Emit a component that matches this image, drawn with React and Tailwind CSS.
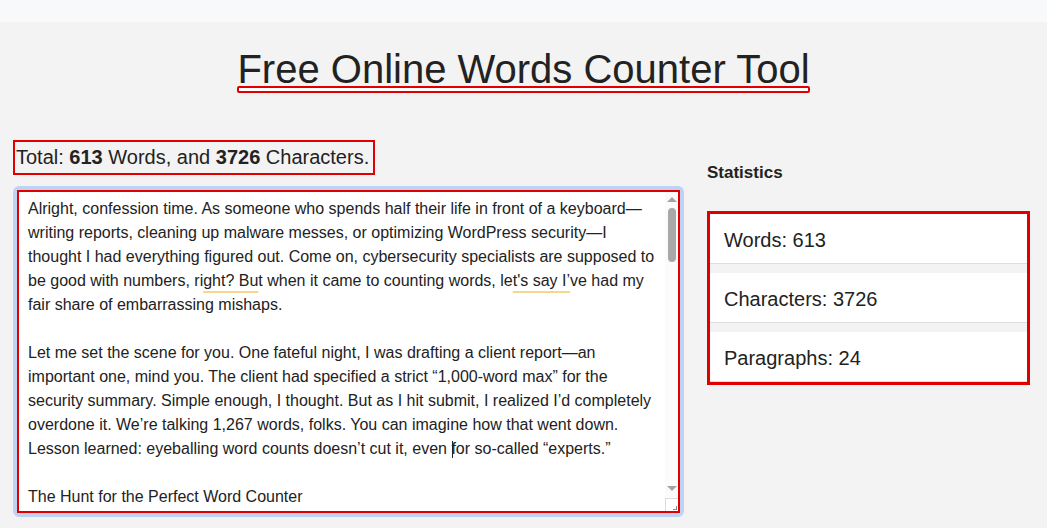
const paragraphs = [
  [
    'Alright, confession time. As someone who spends half their life in front of a keyboard—',
    'writing reports, cleaning up malware messes, or optimizing WordPress security—I',
    'thought I had everything figured out. Come on, cybersecurity specialists are supposed to',
    'LINE4',
    'fair share of embarrassing mishaps.',
  ],
  [
    'Let me set the scene for you. One fateful night, I was drafting a client report—an',
    'important one, mind you. The client had specified a strict “1,000-word max” for the',
    'security summary. Simple enough, I thought. But as I hit submit, I realized I’d completely',
    'overdone it. We’re talking 1,267 words, folks. You can imagine how that went down.',
    'LINE10',
  ],
  ['The Hunt for the Perfect Word Counter'],
];

const squiggle = 'underline decoration-[#f7d68e] decoration-2 underline-offset-[5px]';

const renderLine = (line) => {
  if (line === 'LINE4') {
    return (
      <>
        be good with numbers, ri<span className={squiggle}>ght? Bu</span>t when it came to counting words, le
        <span className={squiggle}>t's say I’</span>ve had my
      </>
    );
  }
  if (line === 'LINE10') {
    return (
      <>
        Lesson learned: eyeballing word counts doesn’t cut it, even f
        <span className="inline-block w-px h-[17px] bg-[#222] align-[-4px] -ml-[4px] mr-[3px]" />
        or so-called “experts.”
      </>
    );
  }
  return line;
};

const stats = [
  { label: 'Words', value: 613 },
  { label: 'Characters', value: 3726 },
  { label: 'Paragraphs', value: 24 },
];

export default function App() {
  return (
    <div className="min-h-[528px] bg-[#f3f3f3] font-['Liberation_Sans',Arial,sans-serif] text-[#222]">
      <div className="h-[22px] bg-[#f8f9fa]" />

      {/* Title */}
      <div className="flex justify-center mt-[27px]">
        <div className="inline-flex flex-col">
          <h1 className="text-[40px] leading-[40px] text-[#222]">Free Online Words Counter Tool</h1>
          <div className="h-[7px] -mt-[3px] border-2 border-[#e00000] rounded-[2px] bg-white" />
        </div>
      </div>

      <div className="flex gap-[23px] px-[13px] pr-[17px] mt-[47px]">
        {/* Left */}
        <div className="flex-1">
          <div className="inline-block border-2 border-[#e00000] pl-px pr-[4px] h-[35px] text-[20px] leading-[31px]">
            Total: <b>613</b> Words, and <b>3726</b> Characters.
          </div>

          <div className="mt-[11px] rounded-[6px] border-[4px] border-[#bfd2f4]">
            <div className="flex h-[323px] border-2 border-[#e00000] bg-white">
              <div className="flex-1 overflow-hidden pl-[9px] pt-[5px] text-[16px] leading-[24px]">
                {paragraphs.map((p, i) => (
                  <div key={i} className={i < paragraphs.length - 1 ? 'mb-[24px]' : ''}>
                    {p.map((line, j) => (
                      <div key={j} className="whitespace-nowrap">{renderLine(line)}</div>
                    ))}
                  </div>
                ))}
              </div>

              {/* scrollbar */}
              <div className="w-[13px] flex flex-col items-center bg-[#fbfbfb]">
                <div className="mt-[5px] w-0 h-0 border-l-[5px] border-r-[5px] border-b-[5px] border-l-transparent border-r-transparent border-b-[#a3a3a3]" />
                <div className="mt-[6px] w-[8px] h-[54px] rounded-full bg-[#a8a8a8]" />
                <div className="flex-1" />
                <div className="mb-[7px] w-0 h-0 border-l-[5px] border-r-[5px] border-t-[5px] border-l-transparent border-r-transparent border-t-[#a3a3a3]" />
                <div className="w-[13px] h-[13px] border-l border-t border-[#dcdcdc] bg-white relative">
                  <div className="absolute right-[1px] bottom-[1px] w-[4px] h-[4px] border-r border-b border-[#888]" />
                </div>
              </div>
            </div>
          </div>
        </div>

        {/* Right */}
        <div className="w-[323px]">
          <h2 className="mt-[21px] text-[17px] leading-[24px] font-bold">Statistics</h2>
          <div className="mt-[26px] border-[3px] border-[#e00000] bg-[#f3f3f3]">
            {stats.map((s, i) => (
              <div
                key={s.label}
                className={`h-[50px] flex items-center pt-[3px] px-[14px] bg-white border-b border-[#dedede] text-[20px] ${
                  i < stats.length - 1 ? 'mb-[9px]' : ''
                }`}
              >
                {s.label}: {s.value}
              </div>
            ))}
          </div>
        </div>
      </div>
    </div>
  );
}
